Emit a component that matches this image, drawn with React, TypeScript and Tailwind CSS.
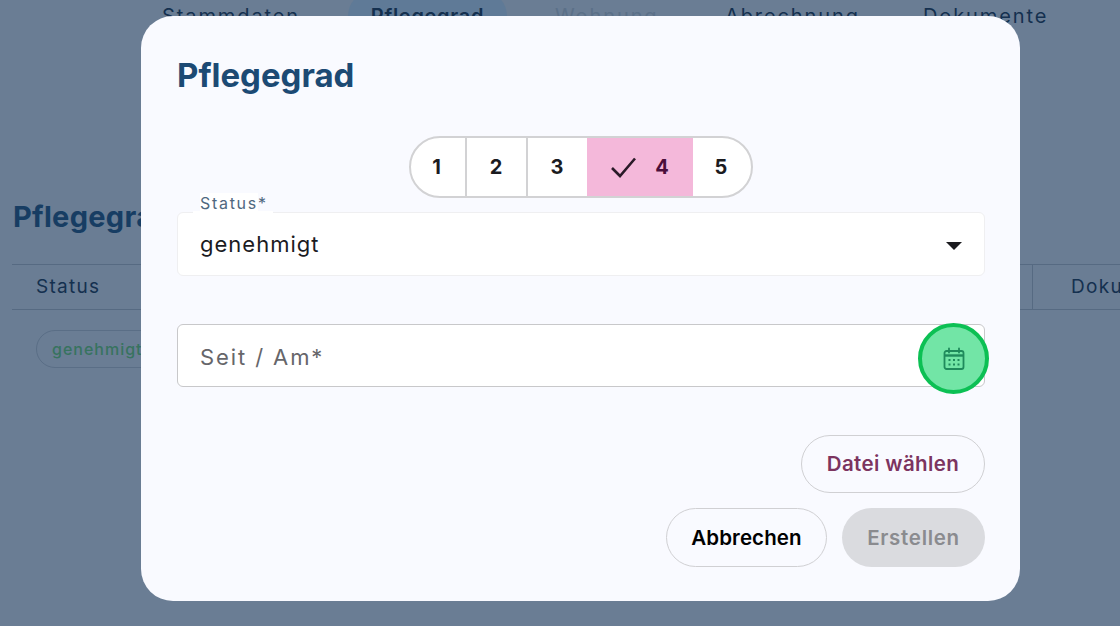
const tabs = [
  { label: "Stammdaten", className: "w-[200px] pl-[14px] tracking-[1.9px] text-[#14304f]" },
  { label: "Pflegegrad", className: "w-[159px] justify-center rounded-full bg-[#5f7a97] font-semibold tracking-[0.7px] text-[#14304f]" },
  { label: "Wohnung", className: "ml-[48px] w-[170px] tracking-[1.9px] text-[#5b7088]" },
  { label: "Abrechnung", className: "w-[198px] tracking-[1.9px] text-[#14304f]" },
  { label: "Dokumente", className: "tracking-[1.9px] text-[#14304f]" },
];

const grades = [
  { label: "1", className: "w-[56px] border-r-2 pr-[2px]" },
  { label: "2", className: "w-[61px] border-r-2" },
  { label: "3", className: "w-[59px]" },
  { label: "4", className: "w-[106px] gap-[17px] bg-[#f4b8da] text-[#4a0f3c]", selected: true },
  { label: "5", className: "w-[58px] pr-[1px]" },
];

function CalendarIcon() {
  return (
    <svg width="24" height="24" viewBox="0 0 24 24" fill="none" stroke="#1f8a5c" strokeWidth="1.8">
      <rect x="2.5" y="4" width="19" height="18" rx="2" />
      <path d="M7 1.5v4M17 1.5v4" strokeLinecap="round" />
      <path d="M3 8.5h18" strokeWidth="2.4" />
      <g fill="#1f8a5c" stroke="none">
        <rect x="6.5" y="12" width="2" height="2" />
        <rect x="11" y="12" width="2" height="2" />
        <rect x="15.5" y="12" width="2" height="2" />
        <rect x="6.5" y="16.5" width="2" height="2" />
        <rect x="11" y="16.5" width="2" height="2" />
        <rect x="15.5" y="16.5" width="2" height="2" />
      </g>
    </svg>
  );
}

function CheckIcon() {
  return (
    <svg width="28" height="24" viewBox="0 0 28 24" fill="none" stroke="#2a1a28" strokeWidth="2.6">
      <path d="M2 13l8 8L25 3.5" />
    </svg>
  );
}

function Background() {
  return (
    <div className="h-[626px] w-[1120px] overflow-hidden bg-[#6a7d94] font-['Inter',sans-serif]">
      <div className="-mt-[9px] flex h-[50px] items-center pl-[148px] text-[20px]">
        {tabs.map((tab) => (
          <div key={tab.label} className={`flex h-full shrink-0 items-center ${tab.className}`}>
            {tab.label}
          </div>
        ))}
      </div>
      <h2 className="mt-[158px] pl-[13px] text-[29px] font-bold leading-[36px] tracking-[0.3px] text-[#173d63]">
        Pflegegrad
      </h2>
      <div className="ml-[12px] mt-[29px] flex h-[46px] items-center border-y border-[#566a82] pl-[24px] text-[19px] tracking-[1.3px] text-[#14304f]">
        <span>Status</span>
        <div className="ml-auto flex h-full w-[88px] items-center border-l border-[#566a82] pl-[38px]">
          Doku
        </div>
      </div>
      <div className="ml-[36px] mt-[20px] flex h-[38px] w-[160px] items-center rounded-full border border-[#5a6e86] pl-[15px] text-[16px] font-medium tracking-[1px] text-[#37735f]">
        genehmigt
      </div>
    </div>
  );
}

function GradePicker() {
  return (
    <div className="flex h-[62px] w-[344px] self-center overflow-hidden rounded-full border-2 border-[#d2d2d4] bg-white">
      {grades.map((grade) => (
        <div
          key={grade.label}
          className={`flex h-full shrink-0 items-center justify-center border-[#d2d2d4] text-[20px] font-bold text-[#1b1b1f] ${grade.className}`}
        >
          {grade.selected && <CheckIcon />}
          {grade.label}
        </div>
      ))}
    </div>
  );
}

export default function App() {
  return (
    <div className="relative h-[626px] w-[1120px] overflow-hidden">
      <Background />

      <div className="absolute left-[141px] top-[16px] flex h-[585px] w-[879px] flex-col rounded-[32px] bg-[#f9faff] px-[36px] pt-[38px] font-['Inter',sans-serif]">
        <h1 className="text-[33px] font-bold leading-[42px] text-[#1c4a74]">Pflegegrad</h1>

        <div className="mt-[40px] flex flex-col">
          <GradePicker />
        </div>

        <div className="relative mt-[14px] flex h-[64px] w-[808px] items-center rounded-[6px] border border-[#efeff1] bg-white pl-[22px] text-[22px] tracking-[1px] text-[#1b1b1f]">
          <span className="absolute -top-[2px] left-[15px] h-[3px] w-[80px] bg-white" />
          <span className="absolute -top-[19px] left-[22px] text-[16px] leading-[19px] tracking-[1.7px] text-[#4f6880]">
            <span className="bg-white">Status</span>*
          </span>
          <span className="pt-[1px]">genehmigt</span>
          <span className="absolute right-[22px] top-[29px] h-0 w-0 border-x-[8px] border-t-[8px] border-x-transparent border-t-[#1b1b1f]" />
        </div>

        <div className="relative mt-[48px] flex h-[63px] w-[808px] items-center rounded-[6px] border border-[#c8c8ca] bg-white pl-[22px] text-[22px] tracking-[1.9px] text-[#66666a]">
          <span className="pt-[3px]">Seit / Am*</span>
          <div className="absolute -right-[5px] -top-[2px] flex h-[71px] w-[71px] items-center justify-center rounded-full border-4 border-[#0cc054] bg-[#72e5a6]">
            <CalendarIcon />
          </div>
        </div>

        <div className="mt-[48px] flex w-[808px] flex-col items-end gap-[15px]">
          <button className="h-[58px] w-[184px] rounded-full border-[1.5px] border-[#d0d0d3] pt-[1px] text-[20.5px] font-semibold tracking-[0.4px] text-[#7c345f]">
            Datei wählen
          </button>
          <div className="flex gap-[15px]">
            <button className="h-[59px] w-[161px] rounded-full border-[1.5px] border-[#d0d0d3] pt-[1px] text-[20.5px] font-semibold tracking-[0.1px] text-black">
              Abbrechen
            </button>
            <button className="h-[59px] w-[143px] rounded-full bg-[#dadbdf] pt-[1px] text-[20.5px] font-semibold tracking-[0.7px] text-[#8a8b8f]">
              Erstellen
            </button>
          </div>
        </div>
      </div>
    </div>
  );
}
